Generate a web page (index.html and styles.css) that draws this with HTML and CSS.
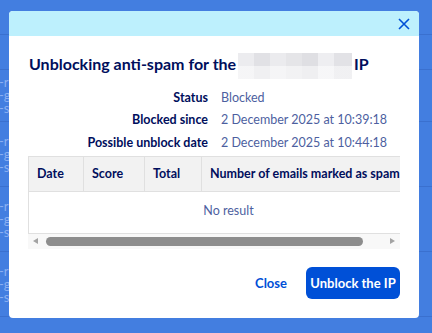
FILE: index.html
```html
<!DOCTYPE html>
<html lang="en">
<head>
    <meta charset="UTF-8">
    <meta name="viewport" content="width=device-width, initial-scale=1.0">
    <title>Unblocking anti-spam</title>
    <link rel="stylesheet" href="styles.css">
</head>
<body>
    <!-- page underneath the dialog -->
    <div class="page">
        <div class="page-row row-short"></div>
        <div class="page-row row-short"></div>
        <div class="page-row row-mid"><span>-rl</span><span>-g</span><span>-s</span></div>
        <div class="page-row row-tall"><span>-r</span><span>-g</span><span>-s</span></div>
        <div class="page-row row-tall"><span>-r</span><span>-g</span><span>-s</span></div>
        <div class="page-row row-tall"><span>-r</span><span>-g</span><span>-s</span></div>
    </div>

    <div class="modal">
        <div class="modal-header">
            <button class="modal-close" aria-label="Close">
                <svg width="12" height="12" viewBox="0 0 12 12">
                    <path d="M1 1 L11 11 M11 1 L1 11" stroke="currentColor" stroke-width="1.6" fill="none"/>
                </svg>
            </button>
        </div>

        <div class="modal-body">
            <h2 class="modal-title">
                Unblocking anti-spam for the
                <span class="ip-blur"></span>
                IP
            </h2>

            <dl class="details">
                <dt>Status</dt>
                <dd>Blocked</dd>
                <dt>Blocked since</dt>
                <dd>2 December 2025 at 10:39:18</dd>
                <dt>Possible unblock date</dt>
                <dd>2 December 2025 at 10:44:18</dd>
            </dl>

            <div class="table-wrap">
                <div class="table-scroll">
                    <table class="spam-table">
                        <thead>
                            <tr>
                                <th class="col-date">Date</th>
                                <th class="col-score">Score</th>
                                <th class="col-total">Total</th>
                                <th>Number of emails marked as spam</th>
                            </tr>
                        </thead>
                        <tbody>
                            <tr>
                                <td colspan="4" class="empty">No result</td>
                            </tr>
                        </tbody>
                    </table>
                </div>
                <div class="scrollbar">
                    <span class="arrow arrow-left"></span>
                    <div class="track"><div class="thumb"></div></div>
                    <span class="arrow arrow-right"></span>
                </div>
            </div>

            <div class="actions">
                <a href="#" class="btn-link">Close</a>
                <button class="btn-primary">Unblock the IP</button>
            </div>
        </div>
    </div>
</body>
</html>
```

FILE: styles.css
```css
* {
    margin: 0;
    padding: 0;
    box-sizing: border-box;
}

body {
    font-family: "Source Sans Pro", Lato, "Liberation Sans", sans-serif;
    background: #437ee0;
    width: 432px;
    height: 333px;
    overflow: hidden;
    position: relative;
}

/* background page */
.page {
    display: flex;
    flex-direction: column;
}

.page-row {
    border-bottom: 1px solid #3a70cf;
    display: flex;
    flex-direction: column;
    justify-content: center;
    font-size: 13px;
    line-height: 13px;
    color: #8cb0f2;
    margin-left: -1px;
}

.row-short {
    height: 35px;
}

.row-mid {
    height: 52px;
}

.row-tall {
    height: 65px;
}

/* dialog */
.modal {
    position: absolute;
    left: 9px;
    top: 11px;
    width: 410px;
    height: 307px;
    background: #fff;
    border-radius: 4px;
    overflow: hidden;
    display: flex;
    flex-direction: column;
}

.modal-header {
    height: 25px;
    flex-shrink: 0;
    background: #bdf0fd;
    display: flex;
    justify-content: flex-end;
    align-items: center;
    padding-right: 8px;
}

.modal-close {
    background: none;
    border: none;
    color: #0050d7;
    width: 14px;
    height: 14px;
    display: flex;
    align-items: center;
    justify-content: center;
    cursor: pointer;
}

.modal-body {
    padding: 15px 19px 19px 19px;
    display: flex;
    flex-direction: column;
    flex: 1;
}

.modal-title {
    font-size: 16px;
    line-height: 26px;
    font-weight: 700;
    color: #000e5c;
    margin-left: 1px;
    white-space: nowrap;
}

.ip-blur {
    display: inline-block;
    width: 114px;
    height: 26px;
    vertical-align: middle;
    margin: 0 -2px;
    background:
        linear-gradient(to bottom, rgba(255,255,255,0) 50%, rgba(255,255,255,0.5) 50%),
        linear-gradient(to right,
            #ececef 0 16px, #e1e1e5 16px 32px, #ebebee 32px 48px, #e5e5e8 48px 64px,
            #dfdfe3 64px 80px, #eeeef1 80px 96px, #e2e2e6 96px 114px);
}

.details {
    display: grid;
    grid-template-columns: 180px 1fr;
    column-gap: 13px;
    row-gap: 0.5px;
    margin-top: 8px;
    font-size: 12.5px;
    line-height: 22px;
    white-space: nowrap;
}

.details dt {
    text-align: right;
    font-weight: 700;
    color: #000e5c;
}

.details dd {
    color: #4d5f9f;
}

/* table */
.table-wrap {
    margin-top: 2px;
    width: 372px;
}

.table-scroll {
    overflow: hidden;
}

.spam-table {
    width: 401px;
    border-collapse: collapse;
    font-size: 12.5px;
}

.spam-table th {
    background: #f2f2f2;
    color: #000e5c;
    font-weight: 700;
    text-align: left;
    height: 35px;
    padding: 0 8px;
    border: 1px solid #e0e0e0;
    white-space: nowrap;
}

.col-date {
    width: 55px;
}

.col-score {
    width: 61px;
}

.col-total {
    width: 57px;
}

.spam-table td {
    border: 1px solid #e0e0e0;
    height: 42px;
    padding-bottom: 3px;
}

.empty {
    text-align: center;
    color: #4d5f9f;
}

.scrollbar {
    height: 15px;
    background: #f8f8f8;
    display: flex;
    align-items: center;
}

.arrow {
    width: 15px;
    height: 15px;
    display: flex;
    align-items: center;
    justify-content: center;
}

.arrow::before {
    content: "";
    border-top: 3.5px solid transparent;
    border-bottom: 3.5px solid transparent;
}

.arrow-left::before {
    border-right: 5px solid #a3a3a3;
}

.arrow-right::before {
    border-left: 5px solid #a3a3a3;
}

.track {
    flex: 1;
    height: 15px;
    display: flex;
    align-items: center;
    padding-left: 3px;
}

.thumb {
    width: 317px;
    height: 9px;
    border-radius: 5px;
    background: #8d8d8d;
}

/* footer buttons */
.actions {
    margin-top: auto;
    display: flex;
    justify-content: flex-end;
    align-items: center;
    gap: 19px;
    width: 372px;
}

.btn-link {
    color: #0050d7;
    font-weight: 700;
    font-size: 13px;
    text-decoration: none;
}

.btn-primary {
    background: #0050d7;
    color: #fff;
    border: none;
    border-radius: 6px;
    width: 94px;
    height: 32px;
    font-family: inherit;
    font-size: 13px;
    font-weight: 700;
    cursor: pointer;
}
```
